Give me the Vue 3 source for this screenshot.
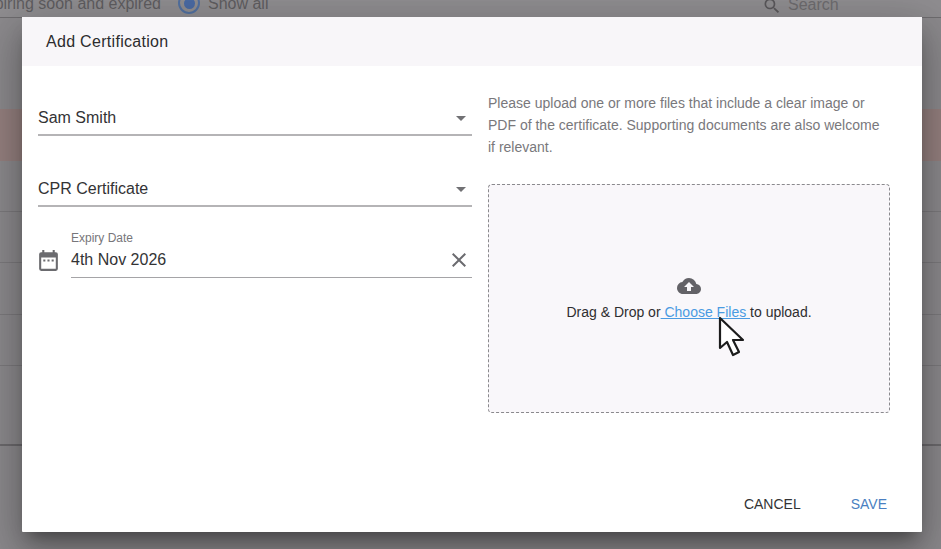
<script setup>
const rows = [
  { h: 91, cls: '' },
  { h: 52, cls: 'alert' },
  { h: 50, cls: '' },
  { h: 51, cls: 'line' },
  { h: 52, cls: 'line' },
  { h: 51, cls: 'line' },
  { h: 79, cls: 'line' },
  { h: 105, cls: 'thick' }
]
const selects = ['Sam Smith', 'CPR Certificate']
</script>

<template>
  <div class="page">
    <div class="toolbar">
      <span class="filter">Expiring soon and expired</span>
      <span class="radio"><span class="dot"></span></span>
      <span class="show">Show all</span>
      <span class="search">
        <svg width="20" height="20" viewBox="0 0 24 24"><path fill="#5a585b" d="M15.5 14h-.79l-.28-.27A6.47 6.47 0 0 0 16 9.5 6.5 6.5 0 1 0 9.5 16c1.61 0 3.09-.59 4.23-1.57l.27.28v.79l5 4.99L20.49 19l-4.99-5zm-6 0C7.01 14 5 11.99 5 9.5S7.01 5 9.5 5 14 7.01 14 9.5 11.99 14 9.5 14z"/></svg>
        Search
      </span>
    </div>
    <div v-for="(r, i) in rows" :key="i" class="row" :class="r.cls" :style="{ height: r.h + 'px' }"></div>

    <div class="modal">
      <div class="head">Add Certification</div>
      <div class="body">
        <div class="left">
          <div v-for="s in selects" :key="s" class="select">
            <span>{{ s }}</span>
            <span class="arrow"></span>
          </div>
          <div class="date">
            <svg class="cal" width="25" height="25" viewBox="0 0 24 24"><path fill="#6b6b6f" d="M9 11H7v2h2v-2zm4 0h-2v2h2v-2zm4 0h-2v2h2v-2zm2-7h-1V2h-2v2H8V2H6v2H5a2 2 0 0 0-2 2v14a2 2 0 0 0 2 2h14a2 2 0 0 0 2-2V6a2 2 0 0 0-2-2zm0 16H5V9h14v11z"/></svg>
            <div class="date-field">
              <label>Expiry Date</label>
              <div class="date-value">
                <span>4th Nov 2026</span>
                <svg width="24" height="24" viewBox="0 0 24 24"><path fill="#6b6b6f" d="M19 6.41 17.59 5 12 10.59 6.41 5 5 6.41 10.59 12 5 17.59 6.41 19 12 13.41 17.59 19 19 17.59 13.41 12z"/></svg>
              </div>
            </div>
          </div>
        </div>
        <div class="right">
          <p>Please upload one or more files that include a clear image or PDF of the certificate. Supporting documents are also welcome if relevant.</p>
          <div class="drop">
            <svg width="24" height="24" viewBox="0 0 24 24"><path fill="#636267" d="M19.35 10.04A7.49 7.49 0 0 0 12 4C9.11 4 6.6 5.64 5.35 8.04A5.994 5.994 0 0 0 0 14c0 3.31 2.69 6 6 6h13c2.76 0 5-2.24 5-5 0-2.64-2.05-4.78-4.65-4.96zM14 13v4h-4v-4H7l5-5 5 5h-3z"/></svg>
            <div class="drop-text">Drag &amp; Drop or<a> Choose Files </a>to upload.</div>
          </div>
        </div>
      </div>
      <div class="foot">
        <button class="cancel">CANCEL</button>
        <button class="save">SAVE</button>
      </div>
    </div>

    <svg class="cursor" width="28" height="42" viewBox="0 0 28 42"><path fill="#fff" stroke="#1c1c1c" stroke-width="2.2" stroke-linejoin="round" d="M2 2v30l7-6 6 13 6-3-6-12h10z"/></svg>
  </div>
</template>

<style>
html, body { margin: 0; background: #8b898c; }
</style>

<style scoped>
.page {
  position: relative;
  width: 941px;
  height: 549px;
  overflow: hidden;
  background: #8c8a8d;
  font-family: "Liberation Sans", Arial, sans-serif;
}
.toolbar {
  height: 17px;
  border-bottom: 1px solid #6e6c6f;
  overflow: hidden;
  position: relative;
  color: #5f5d60;
  font-size: 16px;
  line-height: 20px;
  background: #8f8d90;
}
.filter { position: absolute; right: 780px; top: -6px; white-space: nowrap; }
.radio {
  position: absolute; left: 178px; top: -8px;
  width: 18px; height: 18px;
  border: 2px solid #52709f; border-radius: 50%;
  display: flex; align-items: center; justify-content: center;
}
.dot { width: 11px; height: 11px; border-radius: 50%; background: #4a6aa3; }
.show { position: absolute; left: 208px; top: -6px; }
.search { position: absolute; left: 762px; top: -6px; display: flex; align-items: center; gap: 6px; color: #6d6b6e; }
.search svg { margin-top: 2px; }
.row { box-sizing: border-box; }
.alert { background: #95807f; }
.line { border-top: 1px solid #7c7a7d; }
.thick { border-top: 2px solid #6c6a6d; }

.modal {
  position: absolute;
  left: 22px; top: 17px;
  width: 900px; height: 515px;
  background: #fff;
  box-shadow: 0 11px 15px -7px rgba(0,0,0,.35), 0 24px 38px 3px rgba(0,0,0,.18), 0 9px 46px 8px rgba(0,0,0,.14);
  display: flex;
  flex-direction: column;
  border-radius: 1px;
}
.head {
  height: 49px;
  background: #f8f6f9;
  padding-left: 24px;
  display: flex;
  align-items: center;
  font-size: 16px;
  letter-spacing: .3px;
  color: #2c2c2e;
}
.body {
  flex: 1;
  display: grid;
  grid-template-columns: 434px 402px;
  column-gap: 16px;
  padding: 0 32px 0 16px;
}
.left { padding-top: 34px; }
.select {
  height: 36px;
  box-sizing: border-box;
  border-bottom: 2px solid #b5b4b6;
  margin-bottom: 35px;
  padding: 2px 6px 0 0;
  display: flex;
  justify-content: space-between;
  align-items: center;
  font-size: 16px;
  color: #333335;
}
.arrow {
  width: 0; height: 0;
  border-left: 5px solid transparent;
  border-right: 5px solid transparent;
  border-top: 5px solid #717174;
}
.date { display: flex; align-items: flex-end; margin-top: -11px; }
.cal { margin: 0 10px 5px -2px; flex: none; }
.date-field { flex: 1; }
.date-field label { display: block; font-size: 12px; color: #77767a; line-height: 14px; margin-bottom: 2px; }
.date-value {
  display: flex;
  justify-content: space-between;
  align-items: center;
  height: 31px;
  padding-bottom: 5px;
  box-sizing: border-box;
  border-bottom: 1px solid #a5a4a7;
  font-size: 16px;
  color: #333335;
}
.date-value svg { margin-right: 1px; }
.right { padding-top: 26px; display: flex; flex-direction: column; }
.right p {
  margin: 0 0 26px;
  font-size: 14px;
  line-height: 22px;
  color: #79787c;
}
.drop {
  height: 229px;
  box-sizing: border-box;
  border: 1px dashed #8a898d;
  border-radius: 4px;
  background: #f9f7fa;
  display: flex;
  flex-direction: column;
  align-items: center;
  padding-top: 89px;
}
.drop svg { margin-bottom: 4px; }
.drop-text { font-size: 14px; line-height: 20px; color: #2e2e30; white-space: pre; }
.drop-text a { color: #4a9be2; text-decoration: underline; }
.foot {
  height: 56px;
  display: flex;
  justify-content: flex-end;
  align-items: center;
  padding-right: 35px;
  gap: 50px;
}
.foot button {
  border: 0; background: none; padding: 0;
  font: 14px/20px "Liberation Sans", Arial, sans-serif;
}
.cancel { color: #333335; }
.save { color: #4a7fc1; }
.cursor { position: absolute; left: 718px; top: 316px; }
</style>
